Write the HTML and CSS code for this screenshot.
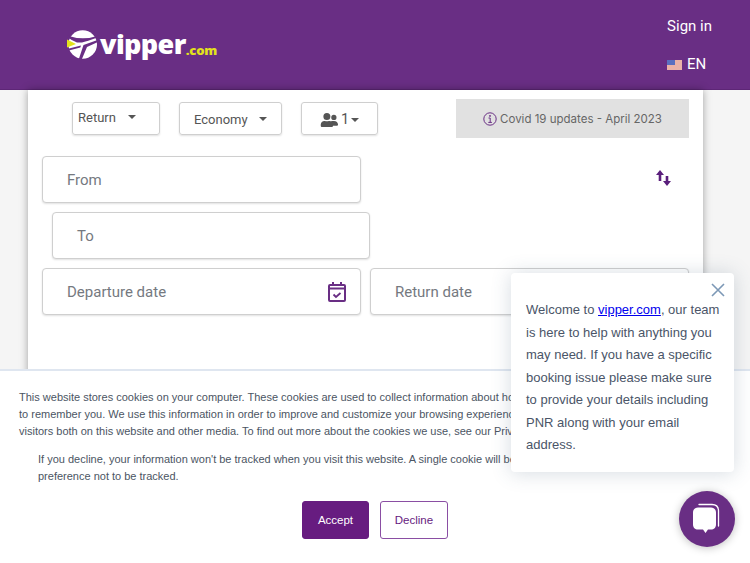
FILE: index.html
```html
<!DOCTYPE html>
<html lang="en">
<head>
    <meta charset="UTF-8">
    <meta name="viewport" content="width=device-width, initial-scale=1.0">
    <title>Vipper</title>
    <link rel="stylesheet" href="styles.css">
</head>
<body>
    <div class="header">
        <div class="logo">
            <svg class="logo-mark" width="32" height="30" viewBox="0 0 32 30">
                <circle cx="15.700" cy="14.500" r="14.300" fill="#fff"/>
                <path d="M0 5.500 Q16 11 32 5.500 L32 7 Q19 11.500 15 12.500 L10 12.500 Q4 10 0 7 Z" fill="#692e84"/>
                <path d="M32 9.500 L32 11.500 L20 17 L14.500 30 L11.500 30 L16.500 15 Z" fill="#692e84"/>
                <path d="M0 19 L14 15.500 L13.300 17.500 L0 21 Z" fill="#692e84"/>
                <path d="M0 9.500 L9 14 L0 17.500 Z" fill="#e3e21c"/>
            </svg>
            <span class="logo-name">vipper</span><span class="logo-tld">.com</span>
        </div>
        <div class="header-links">
            <a class="header-link">Sign in</a>
            <a class="header-link">
                <svg class="flag" width="15" height="10" viewBox="0 0 15 10">
                    <rect width="15" height="10" fill="#f4f4f4"/>
                    <path d="M0 1h15M0 3h15M0 5h15M0 7h15M0 9h15" stroke="#e0705c" stroke-width="1"/>
                    <rect width="8" height="5" fill="#5a6fc0"/>
                </svg>
                EN
            </a>
        </div>
    </div>

    <div class="page">
        <div class="card">
            <div class="options-row">
                <div class="options">
                    <div class="select select-return">Return <span class="caret"></span></div>
                    <div class="select select-class">Economy <span class="caret"></span></div>
                    <div class="select select-pax">
                        <svg width="19" height="14" viewBox="0 0 640 512" fill="#555">
                            <path d="M224 256a128 128 0 1 0 0-256 128 128 0 0 0 0 256zm90 32h-17a174 174 0 0 1-146 0h-17C60 288 0 348 0 422v42c0 26 22 48 48 48h352c26 0 48-22 48-48v-42c0-74-60-134-134-134zm166-32a96 96 0 1 0 0-192 96 96 0 0 0 0 192zm48 32h-4c-14 5-29 8-44 8s-30-3-44-8h-4c-20 0-39 6-56 16 25 27 44 64 44 118v38c0 3 0 5-1 8h165c26 0 48-22 48-48 0-74-60-132-148-132z"/>
                        </svg>
                        <span>1</span><span class="caret"></span>
                    </div>
                </div>
                <div class="covid">
                    <svg width="14" height="14" viewBox="0 0 14 14" fill="none" stroke="#692e84">
                        <circle cx="7" cy="7" r="6.200"/>
                        <path d="M5.500 6h1.700v4.200M5.300 10.400h3.600" stroke-width="1"/>
                        <circle cx="7" cy="3.900" r=".5" fill="#692e84"/>
                    </svg>
                    Covid 19 updates - April 2023
                </div>
            </div>

            <div class="swap-row">
                <div class="field field-half">From</div>
                <svg class="swap" width="15" height="17" viewBox="0 0 15 17" fill="#5a1f7c">
                    <path d="M4 0 L8 5 L5.300 5 L5.300 11 L2.700 11 L2.700 5 L0 5 Z"/>
                    <path d="M11 16 L15 11 L12.300 11 L12.300 6 L9.700 6 L9.700 11 L7 11 Z"/>
                </svg>
            </div>
            <div class="field field-to">To</div>
            <div class="date-row">
                <div class="field field-half field-date">
                    Departure date
                    <svg width="18" height="20" viewBox="0 0 18 20" fill="none" stroke="#692e84" stroke-width="2">
                        <rect x="1" y="3" width="16" height="16" rx="1"/>
                        <path d="M1 6.500h16M5 0v4M13 0v4"/>
                        <path d="M5.500 12.500l2.500 2.500 4.500-4" stroke-width="1.800"/>
                    </svg>
                </div>
                <div class="field field-return">Return date</div>
            </div>
        </div>
    </div>

    <div class="cookie-banner">
        <p class="cookie-text">This website stores cookies on your computer. These cookies are used to collect information about how you interact with our website and allow us to remember you. We use this information in order to improve and customize your browsing experience and for analytics and metrics about our visitors both on this website and other media. To find out more about the cookies we use, see our Privacy Policy.</p>
        <p class="cookie-text cookie-second">If you decline, your information won't be tracked when you visit this website. A single cookie will be used in your browser to remember your preference not to be tracked.</p>
        <div class="cookie-actions">
            <button class="cookie-btn accept">Accept</button>
            <button class="cookie-btn decline">Decline</button>
        </div>
    </div>

    <div class="chat-popup">
        <svg class="chat-close" width="14" height="14" viewBox="0 0 14 14" stroke="#7c98b6" stroke-width="1.600">
            <path d="M1 1l12 12M13 1L1 13"/>
        </svg>
        Welcome to <a class="chat-link">vipper.com</a>, our team is here to help with anything you may need. If you have a specific booking issue please make sure to provide your details including PNR along with your email address.
    </div>
    <div class="chat-launcher">
        <svg width="30" height="32" viewBox="0 0 30 32">
            <path d="M7 1.500h13c4 0 6.500 2.500 6.500 6.500v15" fill="none" stroke="#fff" stroke-width="1.300" stroke-linecap="round"/>
            <path d="M6 4.500h13c3 0 5 2 5 5v12c0 3-2 5-5 5h-3l-2.500 3.500-2.500-3.500H6c-3 0-5-2-5-5v-12c0-3 2-5 5-5z" fill="#fff"/>
        </svg>
    </div>
</body>
</html>
```

FILE: styles.css
```css
:root {
    --purple: #692e84;
    --deep-purple: #671c80;
    --border: #cfcfcf;
    --field-text: #75797f;
}

html, body {
    height: 563px;
    overflow: hidden;
}

body {
    margin: 0;
    background: #f5f5f5;
    font-family: Roboto, 'Liberation Sans', sans-serif;
    color: #555;
}

.header {
    height: 90px;
    background: var(--purple);
    display: flex;
    justify-content: space-between;
    padding: 0 38px 0 67px;
    box-sizing: border-box;
    border-bottom: 1px solid #5d2676;
}

.logo {
    display: flex;
    align-items: center;
    height: 90px;
}

.logo-mark {
    margin-right: 1px;
}

.logo-name {
    font-family: 'Open Sans', sans-serif;
    font-weight: 800;
    font-size: 27px;
    letter-spacing: -0.6px;
    color: #fff;
    margin-bottom: 3px;
}

.logo-tld {
    font-family: 'Open Sans', sans-serif;
    font-weight: 800;
    font-size: 13px;
    letter-spacing: -0.2px;
    color: #e3e21c;
    margin-top: 9px;
}

.header-links {
    display: flex;
    flex-direction: column;
    gap: 19px;
    padding-top: 17px;
}

.header-link {
    font-size: 15px;
    line-height: 19px;
    color: #fff;
    display: flex;
    align-items: center;
    gap: 5px;
}

.page {
    padding-left: 28px;
}

.card {
    width: 675px;
    height: 290px;
    box-sizing: border-box;
    background: #fff;
    box-shadow: 0 0 8px rgba(0,0,0,0.35);
    padding: 9px 14px 0;
}

.options-row {
    display: flex;
    justify-content: space-between;
    height: 39px;
    margin-bottom: 18px;
}

.options {
    display: flex;
    gap: 19px;
    padding: 3px 0 0 30px;
}

.select {
    height: 33px;
    box-sizing: border-box;
    border: 1px solid var(--border);
    border-radius: 3px;
    box-shadow: 0 1px 2px rgba(0,0,0,0.12);
    font-size: 13px;
    display: flex;
    align-items: center;
}

.select-return {
    width: 88px;
    padding: 0 0 3px 5px;
}

.select-return .caret {
    margin: 0 0 0 12px;
}

.select-class {
    width: 103px;
    padding: 1px 0 0 14px;
}

.select-class .caret {
    margin-left: 11px;
}

.select-pax {
    width: 77px;
    padding: 2px 0 0 18px;
    gap: 2px;
    font-size: 14.500px;
}

.caret {
    display: inline-block;
    width: 0;
    height: 0;
    border-left: 4.500px solid transparent;
    border-right: 4.500px solid transparent;
    border-top: 4.500px solid #555;
}

.covid {
    width: 233px;
    height: 39px;
    background: #e1e1e1;
    display: flex;
    align-items: center;
    justify-content: center;
    gap: 3px;
    font-family: Inter, sans-serif;
    font-size: 11.500px;
    color: #666;
}

.field {
    height: 47px;
    box-sizing: border-box;
    border: 1px solid var(--border);
    border-radius: 4px;
    box-shadow: 0 1px 2px rgba(0,0,0,0.12);
    display: flex;
    align-items: center;
    padding: 1px 0 0 24px;
    font-size: 15px;
    color: var(--field-text);
    background: #fff;
}

.field-half {
    width: 319px;
}

.swap-row {
    display: flex;
    align-items: center;
    justify-content: space-between;
    padding-right: 18px;
}

.swap {
    margin-bottom: 3px;
}

.field-to {
    width: 318px;
    margin: 9px 0 9px 10px;
}

.date-row {
    display: flex;
    gap: 9px;
}

.field-date {
    justify-content: space-between;
    padding-right: 14px;
}

.field-return {
    flex: 1;
}

.cookie-banner {
    position: absolute;
    left: 0;
    right: 0;
    top: 369px;
    height: 194px;
    box-sizing: border-box;
    background: #fff;
    border-top: 2px solid #dfe6f0;
    padding: 18px 19px 0;
    font-family: 'Liberation Sans', sans-serif;
}

.cookie-text {
    margin: 0;
    font-size: 11px;
    line-height: 17px;
    color: #4b5563;
}

.cookie-second {
    margin: 11px 0 0 19px;
}

.cookie-actions {
    display: flex;
    justify-content: center;
    gap: 11px;
    margin-top: 16px;
}

.cookie-btn {
    height: 38px;
    box-sizing: border-box;
    border-radius: 3px;
    font-family: 'Liberation Sans', sans-serif;
    font-size: 11.500px;
    padding: 0;
}

.accept {
    width: 67px;
    background: var(--deep-purple);
    border: 1px solid var(--deep-purple);
    color: #fff;
}

.decline {
    width: 68px;
    background: #fff;
    border: 1px solid #8a4ea3;
    color: var(--deep-purple);
}

.chat-popup {
    position: absolute;
    left: 511px;
    top: 273px;
    width: 223px;
    height: 199px;
    box-sizing: border-box;
    background: #fff;
    border-radius: 4px;
    box-shadow: 0 1px 20px rgba(66,91,118,0.22);
    padding: 26px 12px 0 15px;
    font-family: 'Liberation Sans', sans-serif;
    font-size: 13px;
    line-height: 22.500px;
    color: #4a5568;
}

.chat-link {
    color: #0000ee;
    text-decoration: underline;
}

.chat-close {
    position: absolute;
    top: 10px;
    right: 9px;
}

.chat-launcher {
    position: absolute;
    left: 679px;
    top: 491px;
    width: 56px;
    height: 56px;
    border-radius: 50%;
    background: var(--purple);
    box-shadow: 0 1px 8px rgba(0,0,0,0.25);
    display: flex;
    align-items: center;
    justify-content: center;
}
```
